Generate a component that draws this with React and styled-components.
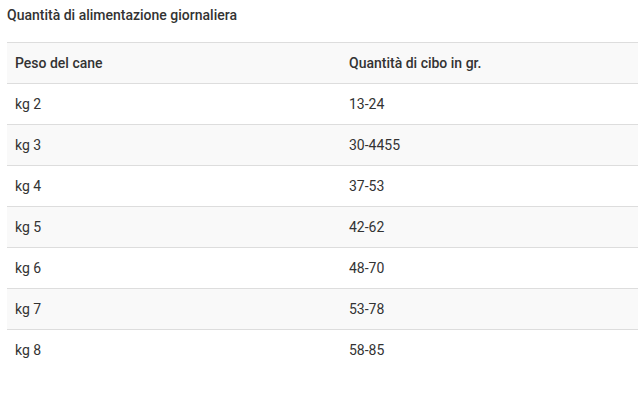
import React from 'react';
import styled, { createGlobalStyle } from 'styled-components';

const GlobalStyle = createGlobalStyle`
  body {
    margin: 0;
    background: #fff;
    font-family: Roboto, "Liberation Sans", sans-serif;
    color: #333;
  }
`;

const Wrapper = styled.div`
  padding: 5px 0 0 7px;
`;

const Title = styled.h4`
  margin: 0 0 17px;
  font-size: 14px;
  font-weight: 500;
  line-height: 20px;
  color: #333;
`;

const Table = styled.table`
  width: 100%;
  border-collapse: collapse;
  font-size: 14px;
`;

const Row = styled.tr`
  background: ${p => (p.$striped ? '#f9f9f9' : '#fff')};
  border-top: 1px solid #ddd;
`;

const Cell = styled.td`
  height: 40px;
  padding: 0 8px;
  vertical-align: middle;
  width: ${p => p.$w || 'auto'};
  font-weight: ${p => (p.$head ? 500 : 400)};
`;

const rows = [
  ['kg 2', '13-24'],
  ['kg 3', '30-4455'],
  ['kg 4', '37-53'],
  ['kg 5', '42-62'],
  ['kg 6', '48-70'],
  ['kg 7', '53-78'],
  ['kg 8', '58-85'],
];

export default function App() {
  return (
    <>
      <GlobalStyle />
      <Wrapper>
        <Title>Quantità di alimentazione giornaliera</Title>
        <Table>
          <thead>
            <Row $striped>
              <Cell $head $w="318px">Peso del cane</Cell>
              <Cell $head>Quantità di cibo in gr.</Cell>
            </Row>
          </thead>
          <tbody>
            {rows.map(([peso, qty], i) => (
              <Row key={peso} $striped={i % 2 === 1}>
                <Cell>{peso}</Cell>
                <Cell>{qty}</Cell>
              </Row>
            ))}
          </tbody>
        </Table>
      </Wrapper>
    </>
  );
}
